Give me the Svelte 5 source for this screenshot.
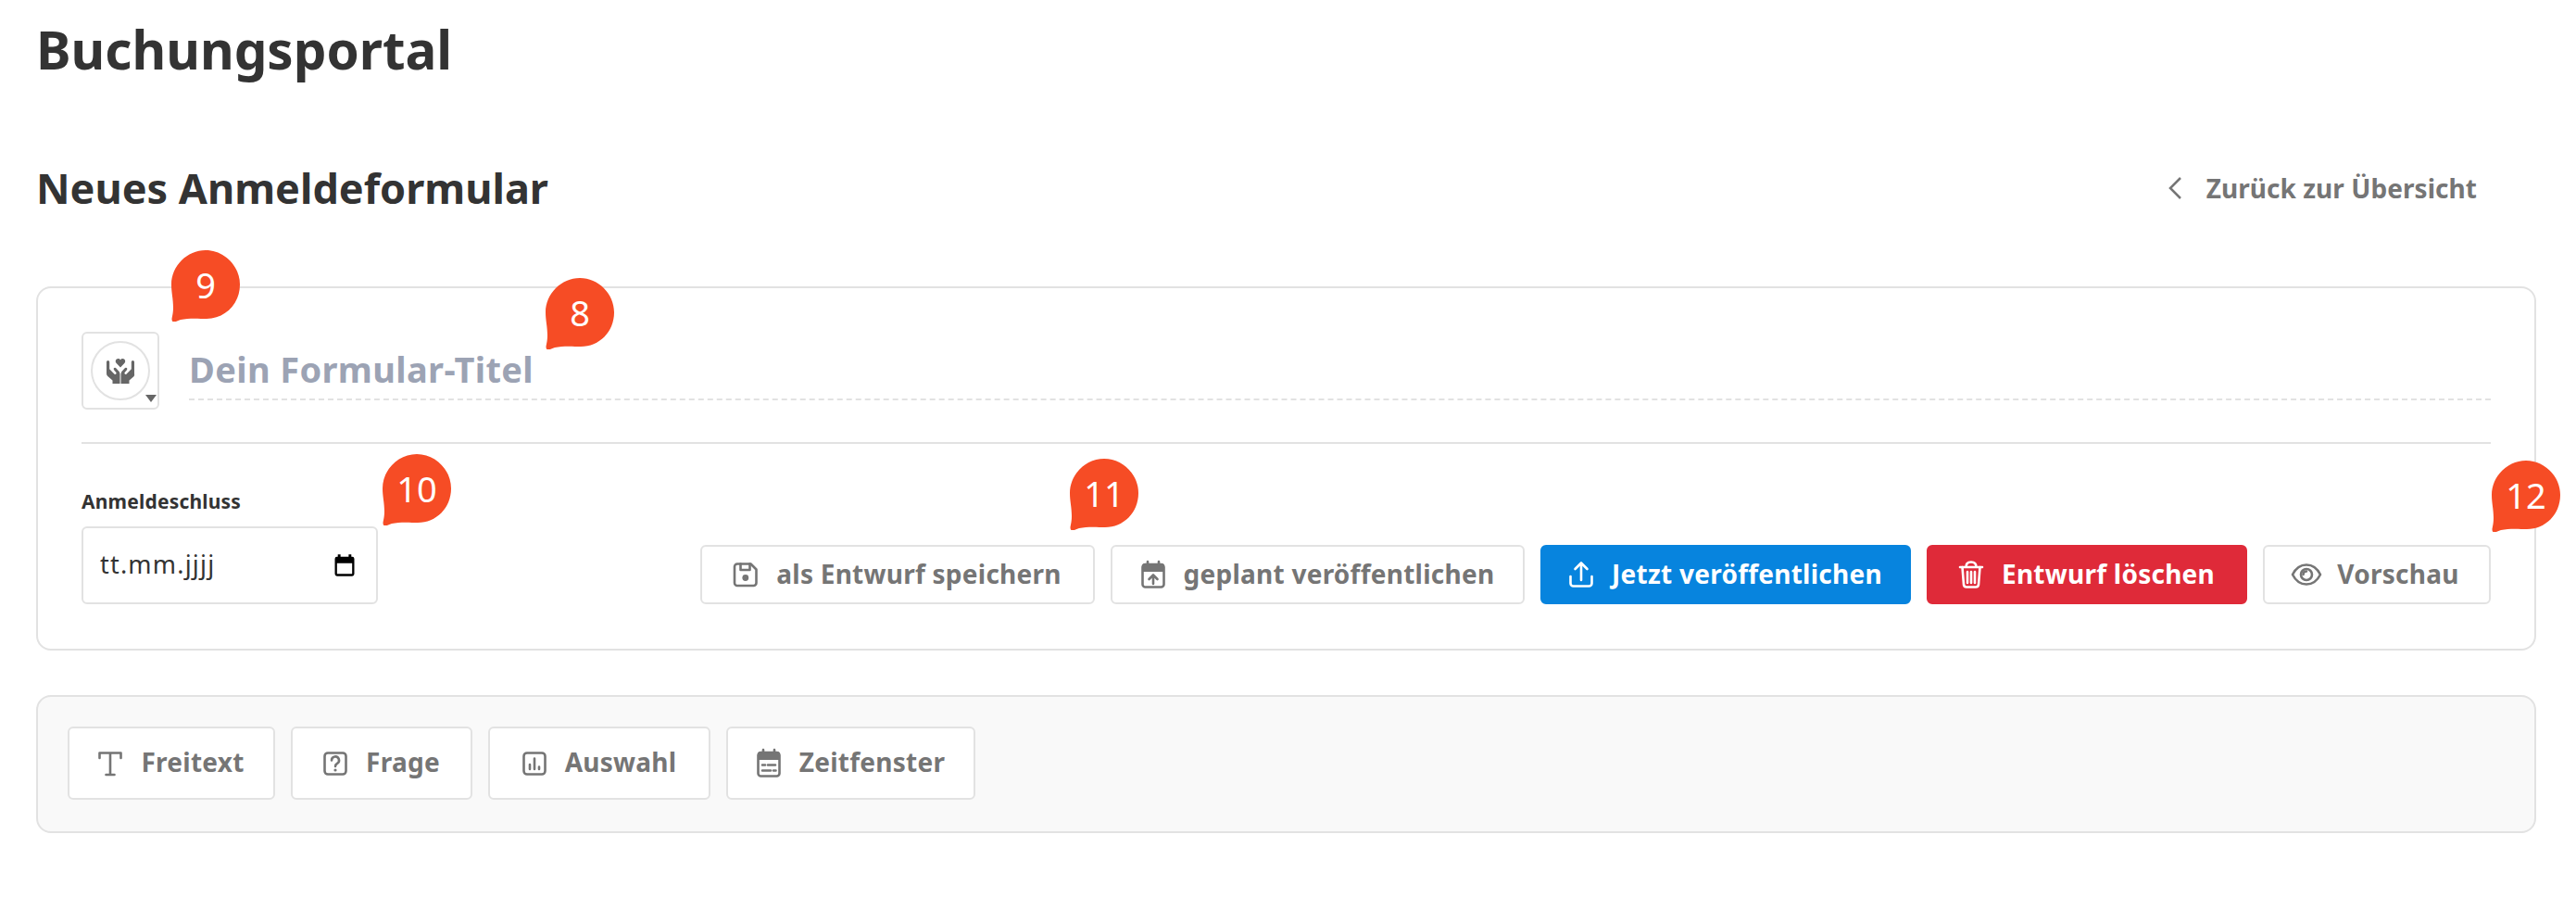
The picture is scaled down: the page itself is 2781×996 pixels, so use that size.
<script>
  const markers = [
    { n: 9, x: 185, y: 270 },
    { n: 8, x: 589, y: 300 },
    { n: 10, x: 413, y: 490 },
    { n: 11, x: 1155, y: 495 },
    { n: 12, x: 2690, y: 497 }
  ];
  const actions = [
    { label: "als Entwurf speichern", icon: "save", w: 426 },
    { label: "geplant veröffentlichen", icon: "calup", w: 447 },
    { label: "Jetzt veröffentlichen", icon: "upload", w: 400, kind: "primary" },
    { label: "Entwurf löschen", icon: "trash", w: 346, kind: "danger" },
    { label: "Vorschau", icon: "eye", w: 246 }
  ];
  const blocks = [
    { label: "Freitext", icon: "text", w: 224 },
    { label: "Frage", icon: "question", w: 196 },
    { label: "Auswahl", icon: "chart", w: 240 },
    { label: "Zeitfenster", icon: "calendar", w: 269 }
  ];
</script>

{#snippet icon(name)}
  <svg class="ico" viewBox="0 0 26 30" aria-hidden="true">
    {#if name === "save"}
      <path d="M4 3.500h14.500l6 6V24a3 3 0 0 1-3 3H4a3 3 0 0 1-3-3V6.500a3 3 0 0 1 3-3z" class="line" />
      <path d="M7.500 3.500v6.500h10V3.500" class="line" />
      <circle cx="12.800" cy="18.500" r="3.400" class="solid" />
    {:else if name === "calup"}
      <path d="M7 1v4M19 1v4" class="line" />
      <path d="M1 6a3 3 0 0 1 3-3h18a3 3 0 0 1 3 3v6H1z" class="solid" />
      <rect x="1.500" y="4" width="23" height="24.500" rx="3" class="line" />
      <path d="M13 25v-9.500M8.500 20 13 15.500l4.500 4.500" class="line" />
    {:else if name === "upload"}
      <path d="M13 21V3M6.500 9 13 2.500 19.500 9" class="line" />
      <path d="M1.500 17v7.500a3 3 0 0 0 3 3h17a3 3 0 0 0 3-3V17" class="line" />
    {:else if name === "trash"}
      <path d="M1 7h24M7.500 7c0-3 1-5.500 5.500-5.500S18.500 4 18.500 7" class="line" />
      <path d="M3.500 7l1.500 19a3 3 0 0 0 3 2.500h10a3 3 0 0 0 3-2.500L22.500 7" class="line" />
      <path d="M9 12v12M13 12v12M17 12v12" class="line" />
    {:else if name === "eye"}
      <path d="M-2 15C1.500 8 7 4.500 13 4.500S24.500 8 28 15c-3.500 7-9 10.500-15 10.500S1.500 22 -2 15z" class="line" />
      <circle cx="13" cy="15" r="6" class="line" />
      <path d="M13 11.500a3.500 3.500 0 0 0-3.500 3.500" class="line" />
    {:else if name === "text"}
      <path d="M1.500 9V3.500h23V9M13 3.500V27M8.500 27h9" class="line" />
    {:else if name === "question"}
      <rect x="1.500" y="3.500" width="23" height="23" rx="3.500" class="line" />
      <path d="M9 11.500a4 4 0 1 1 6 3.400c-1.400.8-2 1.500-2 3.100" class="line" />
      <circle cx="13" cy="22" r="1.600" class="solid" />
    {:else if name === "chart"}
      <rect x="1.500" y="3.500" width="23" height="23" rx="3.500" class="line" />
      <path d="M8 21v-5M13 21V9.500M18 21v-2.500" class="line" />
    {:else}
      <path d="M7 0v4M19 0v4" class="line" />
      <path d="M1 5a3 3 0 0 1 3-3h18a3 3 0 0 1 3 3v6H1z" class="solid" />
      <rect x="1.500" y="3" width="23" height="25.500" rx="3" class="line" />
      <path d="M6 16.500h3M12 16.500h8M6 22.500h9M18 22.500h2.500" class="line" />
    {/if}
  </svg>
{/snippet}

<div class="page">
  <h1>Buchungsportal</h1>

  <header class="subhead">
    <h2>Neues Anmeldeformular</h2>
    <a class="back" href="#top">
      <svg class="chev" viewBox="0 0 14 24" aria-hidden="true"><path d="M13 1 2 12l11 11" /></svg>
      Zurück zur Übersicht
    </a>
  </header>

  <section class="panel">
    <div class="title-row">
      <button class="picker" type="button" aria-label="Symbol wählen">
        <span class="picker__circle">
          <svg viewBox="0 0 32 30" width="32" height="30" aria-hidden="true">
            <path class="hand" d="M16 11.500 11.500 6.800c-1.600-1.800-.4-4.800 2-4.800 1 0 1.900.5 2.500 1.400C16.600 2.500 17.500 2 18.500 2c2.400 0 3.600 3 2 4.800z" />
            <path class="hand" d="M1 5.500a1.600 1.600 0 0 1 3.200 0v7.800l5.400 5.400a1.300 1.300 0 0 0 1.800-1.800l-2.500-3a1.400 1.400 0 0 1 2.100-1.800l3 3.100c1 1 1.500 2.300 1.500 3.700V29H7.500v-3.500L2.300 21A4 4 0 0 1 1 18z" />
            <path class="hand" d="M31 5.500a1.600 1.600 0 0 0-3.200 0v7.800l-5.400 5.400a1.300 1.300 0 0 1-1.800-1.800l2.500-3a1.400 1.400 0 0 0-2.100-1.800l-3 3.100c-1 1-1.500 2.300-1.500 3.700V29h9v-3.500l5.200-4.500A4 4 0 0 0 31 18z" />
          </svg>
        </span>
        <span class="picker__caret"></span>
      </button>
      <input class="title-input" type="text" placeholder="Dein Formular-Titel" />
    </div>

    <div class="meta-row">
      <label class="field">
        <span class="field__label">Anmeldeschluss</span>
        <span class="date">
          <span class="date__text">tt.mm.jjjj</span>
          <svg viewBox="0 0 24 24" width="28" height="28" aria-hidden="true">
            <path d="M7 2v3M17 2v3" class="black" />
            <path d="M5 4h14a2 2 0 0 1 2 2v14a2 2 0 0 1-2 2H5a2 2 0 0 1-2-2V6a2 2 0 0 1 2-2zm0 6v10h14V10z" />
          </svg>
        </span>
      </label>

      <div class="actions">
        {#each actions as a}
          <button class="btn {a.kind ?? ''}" type="button" style="width: {a.w}px">
            {@render icon(a.icon)}
            <span class="btn__text">{a.label}</span>
          </button>
        {/each}
      </div>
    </div>
  </section>

  <section class="toolbox">
    {#each blocks as b}
      <button class="btn btn--tall" type="button" style="width: {b.w}px">
        {@render icon(b.icon)}
        <span class="btn__text">{b.label}</span>
      </button>
    {/each}
  </section>

  {#each markers as m}
    <span class="marker" style="left: {m.x}px; top: {m.y}px">
      <svg viewBox="0 0 74 77" width="74" height="77" aria-hidden="true">
        <path d="M37 0c20 0 37 17 37 37 0 21-16 37-36 37-7 0-19-1-28 1-4 1-7 4-9 1.500C-.5 74 2 71 2 62 2 52 0 46 0 37 0 17 17 0 37 0z" />
      </svg>
      <span class="marker__n">{m.n}</span>
    </span>
  {/each}
</div>

<style>
  :global(body) {
    margin: 0;
    background: #fff;
  }
  .page {
    position: relative;
    box-sizing: border-box;
    width: 2781px;
    height: 996px;
    padding: 16px 43px 0 39px;
    font-family: "Noto Sans", sans-serif;
    color: #333;
  }
  h1 {
    margin: 0;
    font-size: 56.500px;
    line-height: 76px;
    font-weight: 700;
  }
  .subhead {
    display: flex;
    align-items: center;
    justify-content: space-between;
    margin-top: 78px;
    height: 66px;
  }
  h2 {
    margin: 0;
    font-size: 45px;
    line-height: 66px;
    font-weight: 700;
  }
  .back {
    display: flex;
    align-items: center;
    gap: 27px;
    margin-right: 64px;
    font-size: 28px;
    letter-spacing: 0.05px;
    font-weight: 700;
    color: #757575;
    text-decoration: none;
  }
  .chev {
    width: 14px;
    height: 24px;
  }
  .chev path {
    fill: none;
    stroke: #757575;
    stroke-width: 2.500;
  }
  .panel {
    box-sizing: border-box;
    margin-top: 73px;
    height: 393px;
    padding: 47px 47px 0 47px;
    border: 2px solid #e2e2e2;
    border-radius: 16px;
  }
  .title-row {
    display: flex;
    gap: 32px;
    height: 119px;
    border-bottom: 2px solid #e2e2e2;
  }
  .picker {
    position: relative;
    box-sizing: border-box;
    display: flex;
    align-items: center;
    justify-content: center;
    width: 84px;
    height: 84px;
    padding: 0;
    background: #fff;
    border: 2px solid #e2e2e2;
    border-radius: 6px;
  }
  .picker__circle {
    box-sizing: border-box;
    display: flex;
    align-items: center;
    justify-content: center;
    width: 64px;
    height: 64px;
    border: 2px solid #e2e2e2;
    border-radius: 50%;
  }
  .hand {
    fill: #666;
  }
  .picker__caret {
    position: absolute;
    right: 1px;
    bottom: 6px;
    border-left: 6.500px solid transparent;
    border-right: 6.500px solid transparent;
    border-top: 8px solid #666;
  }
  .title-input {
    flex: 1;
    box-sizing: border-box;
    height: 74px;
    padding: 8px 0 0 0;
    font: 700 38px "Noto Sans", sans-serif;
    letter-spacing: 0.35px;
    color: #333;
    background: transparent;
    border: 0;
    border-bottom: 2px dashed #e2e2e2;
    outline: 0;
  }
  .title-input::placeholder {
    color: #9ca3b4;
    opacity: 1;
  }
  .meta-row {
    display: flex;
    align-items: flex-end;
    justify-content: space-between;
    margin-top: 49px;
  }
  .field {
    display: flex;
    flex-direction: column;
    gap: 14px;
  }
  .field__label {
    font-size: 21px;
    line-height: 26px;
    letter-spacing: 0.2px;
    font-weight: 700;
  }
  .date {
    box-sizing: border-box;
    display: flex;
    align-items: center;
    justify-content: space-between;
    width: 320px;
    height: 84px;
    padding: 0 20px 0 18px;
    font-size: 27px;
    letter-spacing: 1.2px;
    color: #333;
    border: 2px solid #e2e2e2;
    border-radius: 6px;
  }
  .date__text {
    margin-top: -3px;
  }
  .date path {
    fill: #000;
    fill-rule: evenodd;
  }
  .date path.black {
    fill: none;
    stroke: #000;
    stroke-width: 2.500;
  }
  .actions {
    display: flex;
    gap: 17px;
  }
  .btn {
    box-sizing: border-box;
    display: flex;
    align-items: center;
    justify-content: center;
    gap: 20px;
    height: 64px;
    padding: 0;
    font: 700 28px "Noto Sans", sans-serif;
    letter-spacing: 0.25px;
    color: #757575;
    white-space: nowrap;
    background: #fff;
    border: 2px solid #e2e2e2;
    border-radius: 6px;
  }
  .btn__text {
    margin-top: -3px;
  }
  .btn--tall {
    height: 79px;
  }
  .primary {
    color: #fff;
    background: #0784de;
    border-color: #0784de;
  }
  .danger {
    color: #fff;
    background: #df2a39;
    border-color: #df2a39;
  }
  .ico {
    flex: none;
    width: 26px;
    height: 30px;
    overflow: visible;
  }
  .line {
    fill: none;
    stroke: currentColor;
    stroke-width: 2.600;
    stroke-linecap: round;
    stroke-linejoin: round;
  }
  .solid {
    fill: currentColor;
  }
  .toolbox {
    box-sizing: border-box;
    display: flex;
    align-items: flex-start;
    gap: 17px;
    margin-top: 48px;
    height: 149px;
    padding: 32px;
    background: #f9f9f9;
    border: 2px solid #e2e2e2;
    border-radius: 16px;
  }
  .marker {
    position: absolute;
    width: 74px;
    height: 77px;
  }
  .marker svg {
    display: block;
    fill: #f64c25;
  }
  .marker__n {
    position: absolute;
    left: 0;
    top: 0;
    width: 74px;
    height: 74px;
    font-size: 38px;
    line-height: 74px;
    font-weight: 400;
    text-align: center;
    color: #fff;
  }
</style>
